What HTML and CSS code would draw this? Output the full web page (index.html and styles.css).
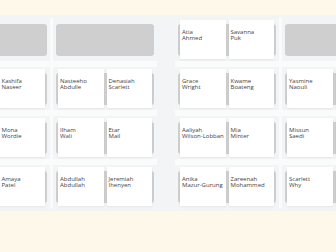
FILE: index.html
```html
<!DOCTYPE html>
<html lang="en">

<head>
    <meta charset="UTF-8">
    <meta name="viewport" content="width=device-width, initial-scale=1.0">
    <title>Seating Plan</title>
    <link rel="stylesheet" href="styles.css">
</head>

<body>
    <div class="room">
        <div class="plan">
            <!-- left side of the room -->
            <div class="block">
                <div class="slot"><div class="table"></div></div>
                <div class="slot"><div class="table"></div></div>

                <div class="slot">
                    <div class="table">
                        <div class="seat">Rayan<br>Hussain</div>
                        <div class="seat">Kashifa<br>Naseer</div>
                    </div>
                </div>
                <div class="slot">
                    <div class="table">
                        <div class="seat">Nasteeho<br>Abdulle</div>
                        <div class="seat">Denasiah<br>Scarlett</div>
                    </div>
                </div>

                <div class="slot">
                    <div class="table">
                        <div class="seat">Leon<br>Carter</div>
                        <div class="seat">Mona<br>Wordie</div>
                    </div>
                </div>
                <div class="slot">
                    <div class="table">
                        <div class="seat">Ilham<br>Wali</div>
                        <div class="seat">Etar<br>Mail</div>
                    </div>
                </div>

                <div class="slot">
                    <div class="table">
                        <div class="seat">Sami<br>Osman</div>
                        <div class="seat">Amaya<br>Patel</div>
                    </div>
                </div>
                <div class="slot">
                    <div class="table">
                        <div class="seat">Abdullah<br>Abdullah</div>
                        <div class="seat">Jeremiah<br>Ihenyen</div>
                    </div>
                </div>
            </div>

            <!-- right side of the room -->
            <div class="block">
                <div class="slot">
                    <div class="table">
                        <div class="seat">Atia<br>Ahmed</div>
                        <div class="seat">Savanna<br>Puk</div>
                    </div>
                </div>
                <div class="slot"><div class="table"></div></div>

                <div class="slot">
                    <div class="table">
                        <div class="seat">Grace<br>Wright</div>
                        <div class="seat">Kwame<br>Boateng</div>
                    </div>
                </div>
                <div class="slot">
                    <div class="table">
                        <div class="seat">Yasmine<br>Naouli</div>
                        <div class="seat">Ruby<br>Lane</div>
                    </div>
                </div>

                <div class="slot">
                    <div class="table">
                        <div class="seat">Aaliyah<br>Wilson-Lobban</div>
                        <div class="seat">Mia<br>Minter</div>
                    </div>
                </div>
                <div class="slot">
                    <div class="table">
                        <div class="seat">Missun<br>Saedi</div>
                        <div class="seat">Omar<br>Farah</div>
                    </div>
                </div>

                <div class="slot">
                    <div class="table">
                        <div class="seat">Anika<br>Mazur-Gurung</div>
                        <div class="seat">Zareenah<br>Mohammed</div>
                    </div>
                </div>
                <div class="slot">
                    <div class="table">
                        <div class="seat">Scarlett<br>Why</div>
                        <div class="seat">Kai<br>Brown</div>
                    </div>
                </div>
            </div>
        </div>
    </div>
</body>

</html>
```

FILE: styles.css
```css
* {
    box-sizing: border-box;
}

body {
    margin: 0;
    background-color: #fef8eb;
    font-family: 'Open Sans', 'Noto Sans', sans-serif;
    color: #444;
}

.room {
    margin-top: 15px;
    padding: 3px 0;
    background-color: #f3f4f6;
    display: flex;
    justify-content: center;
    overflow: hidden;
}

.plan {
    display: flex;
    gap: 18px;
    margin-left: -4px;
    flex-shrink: 0;
}

.block {
    display: grid;
    grid-template-columns: repeat(2, 104px);
    gap: 6px 3px;
    background-color: #fafbfb;
}

.slot {
    height: 43px;
    padding: 2px 3px;
    background-color: #f3f4f6;
    display: flex;
    align-items: center;
}

.table {
    width: 98px;
    height: 32px;
    padding: 0 2px;
    border-radius: 3px;
    background-color: #cfcfcf;
    display: flex;
    align-items: center;
    gap: 3px;
}

.seat {
    flex: 1 1 0;
    min-width: 0;
    height: 39px;
    padding: 9px 2px 0;
    background-color: #fff;
    box-shadow: 0 1px 2px rgba(0, 0, 0, 0.06);
    font-size: 6px;
    line-height: 6px;
    white-space: nowrap;
    overflow: hidden;
}
```
